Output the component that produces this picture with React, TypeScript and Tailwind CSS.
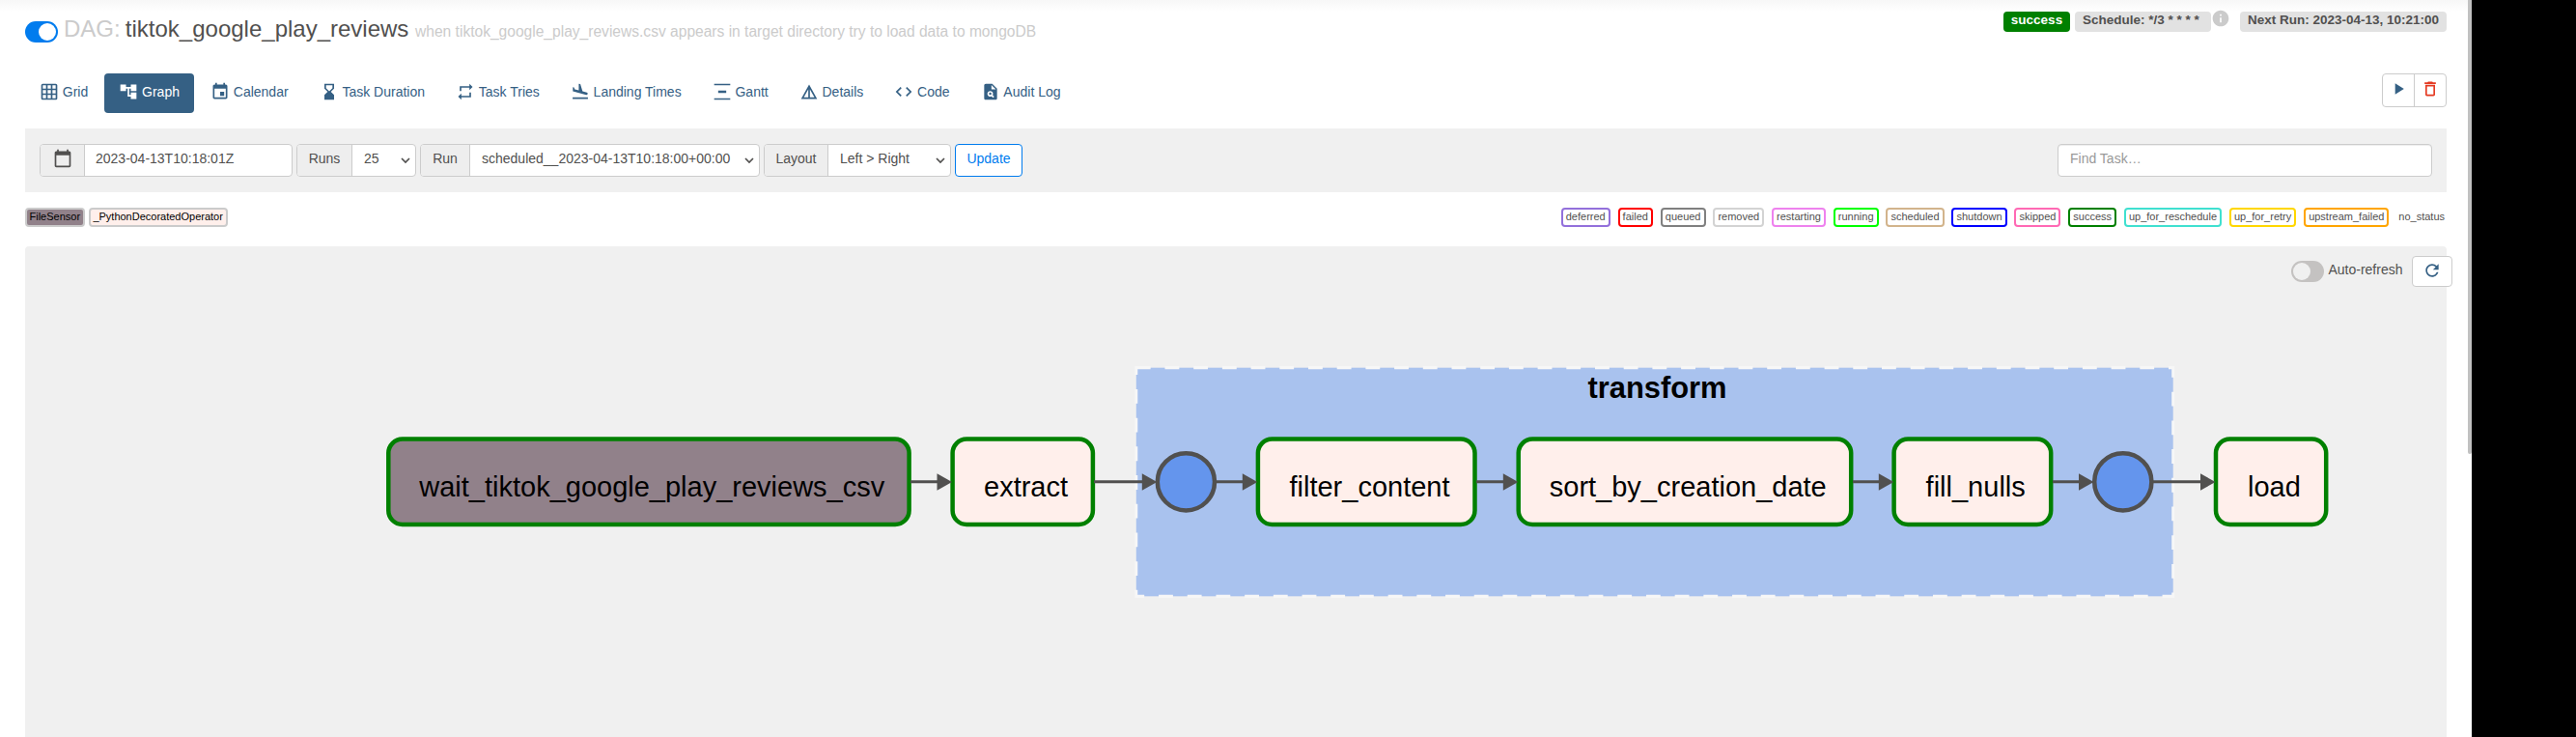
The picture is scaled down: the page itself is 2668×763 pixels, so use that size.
import React from "react";

const ICON = {
  grid: "M20 2H4c-1.1 0-2 .9-2 2v16c0 1.1.9 2 2 2h16c1.1 0 2-.9 2-2V4c0-1.1-.9-2-2-2zM8 20H4v-4h4v4zm0-6H4v-4h4v4zm0-6H4V4h4v4zm6 12h-4v-4h4v4zm0-6h-4v-4h4v4zm0-6h-4V4h4v4zm6 12h-4v-4h4v4zm0-6h-4v-4h4v4zm0-6h-4V4h4v4z",
  tree: "M22 11V3h-7v3H9V3H2v8h7V8h2v10h4v3h7v-8h-7v3h-2V8h2v3z",
  event: "M17 12h-5v5h5v-5zM16 1v2H8V1H6v2H5c-1.11 0-1.99.9-1.99 2L3 19c0 1.1.89 2 2 2h14c1.1 0 2-.9 2-2V5c0-1.1-.9-2-2-2h-1V1h-2zm3 18H5V8h14v11z",
  hourglass: "M6 2v6h.01L6 8.01 10 12l-4 4 .01.01H6V22h12v-5.99h-.01L18 16l-4-4 4-3.99-.01-.01H18V2H6zm10 5.5-4 4-4-4V4h8v3.5z",
  repeat: "M7 7h10v3l4-4-4-4v3H5v6h2V7zm10 10H7v-3l-4 4 4 4v-3h12v-6h-2v4z",
  land: "M2.5 19h19v2h-19zm16.84-3.15c.8.21 1.62-.26 1.84-1.06.21-.8-.26-1.62-1.06-1.84l-5.31-1.42-2.76-9.02L10.12 2v8.28L5.15 8.95l-.93-2.32-1.45-.39v5.17l16.57 4.44z",
  gantt: "M2 2h20v2H2zM2 20h20v2H2zM7 10.5h10v3H7z",
  details: "M12 3 2 21h20L12 3zm1 5.92L18.6 19H13V8.92zm-2 0V19H5.4L11 8.92z",
  code: "M9.4 16.6 4.8 12l4.6-4.6L8 6l-6 6 6 6 1.4-1.4zm5.2 0 4.6-4.6-4.6-4.6L16 6l6 6-6 6-1.4-1.4z",
  audit: "M14 2H6c-1.1 0-1.99.9-1.99 2L4 20c0 1.1.89 2 1.99 2H18c1.1 0 2-.9 2-2V8l-6-6zm1.04 17.45-1.88-1.88c-1.33.71-3.01.53-4.13-.59-1.37-1.37-1.37-3.58 0-4.95 1.37-1.37 3.58-1.37 4.95 0 1.12 1.12 1.31 2.8.59 4.13l1.88 1.88-1.41 1.41zM13 9V3.5L18.5 9H13zM11.5 13a1.5 1.5 0 1 1 0 3 1.5 1.5 0 1 1 0-3z",
  calendar: "M20 3h-1V1h-2v2H7V1H5v2H4c-1.1 0-2 .9-2 2v16c0 1.1.9 2 2 2h16c1.1 0 2-.9 2-2V5c0-1.1-.9-2-2-2zm0 18H4V8h16v13z",
  play: "M8 5v14l11-7z",
  trash: "M6 19c0 1.1.9 2 2 2h8c1.1 0 2-.9 2-2V7H6v12zM8 9h8v10H8V9zm7.5-5-1-1h-5l-1 1H5v2h14V4z",
  info: "M12 2C6.48 2 2 6.48 2 12s4.48 10 10 10 10-4.48 10-10S17.52 2 12 2zm1 15h-2v-6h2v6zm0-8h-2V7h2v2z",
  refresh: "M17.65 6.35C16.2 4.9 14.21 4 12 4c-4.42 0-7.99 3.58-7.99 8s3.57 8 7.99 8c3.73 0 6.84-2.55 7.73-6h-2.08c-.82 2.33-3.04 4-5.65 4-3.31 0-6-2.69-6-6s2.69-6 6-6c1.66 0 3.14.69 4.22 1.78L13 11h7V4l-2.35 2.35z",
};

function Icon({ d, className = "size-5" }: { d: string; className?: string }) {
  return (
    <svg viewBox="0 0 24 24" fill="currentColor" className={`shrink-0 ${className}`}>
      <path d={d} />
    </svg>
  );
}

const TABS = [
  { label: "Grid", icon: ICON.grid },
  { label: "Graph", icon: ICON.tree, active: true },
  { label: "Calendar", icon: ICON.event },
  { label: "Task Duration", icon: ICON.hourglass },
  { label: "Task Tries", icon: ICON.repeat },
  { label: "Landing Times", icon: ICON.land },
  { label: "Gantt", icon: ICON.gantt },
  { label: "Details", icon: ICON.details },
  { label: "Code", icon: ICON.code },
  { label: "Audit Log", icon: ICON.audit },
];

const STATES: [string, string][] = [
  ["deferred", "border-2 px-[3px] border-[mediumpurple]"],
  ["failed", "border-2 px-[3px] border-[red]"],
  ["queued", "border-2 px-[3px] border-[gray]"],
  ["removed", "border-2 px-[3px] border-[lightgrey]"],
  ["restarting", "border-2 px-[3px] border-[violet]"],
  ["running", "border-2 px-[3px] border-[lime]"],
  ["scheduled", "border-2 px-[3px] border-[tan]"],
  ["shutdown", "border-2 px-[3px] border-[blue]"],
  ["skipped", "border-2 px-[3px] border-[hotpink]"],
  ["success", "border-2 px-[3px] border-[green]"],
  ["up_for_reschedule", "border-2 px-[3px] border-[turquoise]"],
  ["up_for_retry", "border-2 px-[3px] border-[gold]"],
  ["upstream_failed", "border-2 px-[3px] border-[orange]"],
  ["no_status", "border-y-2 px-[2px] border-transparent"],
];

function Select({ label, value, labelWidth, valueWidth }: { label: string; value: string; labelWidth: string; valueWidth: string }) {
  return (
    <div className="flex h-[34px] overflow-hidden rounded border border-[#ccc] bg-white">
      <div className={`flex items-center justify-center border-r border-[#ccc] bg-[#eee] pb-1 ${labelWidth}`}>{label}</div>
      <div className={`flex items-center justify-between pl-3 pr-[5px] ${valueWidth}`}>
        <span className="pb-1">{value}</span>
        <svg viewBox="0 0 10 10" className="size-[10px]" fill="none" stroke="currentColor" strokeWidth="1.7">
          <path d="M1 3l4 4 4-4" />
        </svg>
      </div>
    </div>
  );
}

const NODES = [
  { x: 402.3, w: 539.3, label: "wait_tiktok_google_play_reviews_csv", fill: "#91818a" },
  { x: 986.6, w: 145.3, label: "extract", fill: "#ffefeb" },
  { x: 1302.9, w: 224.6, label: "filter_content", fill: "#ffefeb" },
  { x: 1572.7, w: 344.5, label: "sort_by_creation_date", fill: "#ffefeb" },
  { x: 1961.6, w: 162.6, label: "fill_nulls", fill: "#ffefeb" },
  { x: 2295, w: 114.2, label: "load", fill: "#ffefeb" },
];

const EDGES = [
  [943, 986],
  [1133, 1198.3],
  [1260, 1302.3],
  [1529, 1572.3],
  [1919, 1961.3],
  [2126, 2168.5],
  [2230, 2294.5],
];

function Graph() {
  return (
    <svg width="2508" height="508" viewBox="26 255 2508 508" className="block" fontFamily="'Liberation Sans', Arial, sans-serif">
      <g opacity="0.5">
        <rect x="1176.8" y="380.7" width="1073.9" height="236.6" fill="#6495ed" stroke="#fff" strokeWidth="2.97" strokeDasharray="14.85" />
      </g>
      <text x="1716.5" y="411.5" fontSize="30.9" fontWeight="bold" textAnchor="middle">transform</text>
      {NODES.map((n) => (
        <g key={n.label}>
          <rect x={n.x} y="454.6" width={n.w} height="88.4" rx="14.5" fill={n.fill} stroke="green" strokeWidth="4.5" />
          <text x={n.x + n.w / 2 + 3.3} y="513.7" fontSize="29" textAnchor="middle">{n.label}</text>
        </g>
      ))}
      {[1228.4, 2198.8].map((x) => (
        <circle key={x} cx={x} cy="498.8" r="29.6" fill="#6495ed" stroke="#51504f" strokeWidth="4.5" />
      ))}
      {EDGES.map(([a, b]) => (
        <g key={a}>
          <path d={`M${a} 498.8H${b - 8}`} stroke="#51504f" strokeWidth="3" />
          <path d={`M${b - 15.5} 490.3v17.5L${b} 499z`} fill="#51504f" />
        </g>
      ))}
    </svg>
  );
}

export default function App() {
  return (
    <div className="flex h-[763px] w-[2668px] overflow-hidden bg-black font-['Liberation_Sans',Arial,sans-serif] text-sm text-[#51504f]">
      <div className="flex h-full w-[2560px] bg-white">
        <div className="flex w-[2556px] flex-col bg-[linear-gradient(#f7f7f7,#fff_12px)] pl-[26px] pr-[22px]">
          <header className="flex h-[76px] items-start justify-between">
            <div className="flex items-start">
              <div className="mt-[22px] flex h-[22px] w-[34px] items-center justify-end rounded-full bg-[#017cee] px-0.5">
                <div className="size-[18px] rounded-full bg-white" />
              </div>
              <h3 className="ml-[6px] mt-[16px] whitespace-pre text-[24px] leading-[27px]">
                <span className="-mr-[1.5px] text-[#cbcbcb]">DAG:</span> tiktok_google_play_reviews{" "}
                <span className="text-[15.6px] tracking-[-0.01px] text-[#cbcbcb]">
                  when tiktok_google_play_reviews.csv appears in target directory try to load data to mongoDB
                </span>
              </h3>
            </div>
            <div className="flex items-start pt-3 text-[13.5px] font-bold leading-[17px]">
              <div className="h-[21px] w-[69px] rounded bg-[green] text-center text-white">success</div>
              <div className="ml-[5px] h-[21px] w-[141px] rounded bg-[#e2e2e2] pl-[8px]">Schedule: */3 * * * *</div>
              <Icon d={ICON.info} className="-mt-[3px] size-5 text-[#cbcbcb]" />
              <div className="ml-[10px] h-[21px] w-[214px] rounded bg-[#e2e2e2] text-center">Next Run: 2023-04-13, 10:21:00</div>
            </div>
          </header>

          <div className="flex h-[57px] items-start justify-between">
            <nav className="flex gap-0.5">
              {TABS.map((t) => (
                <div
                  key={t.label}
                  className={`flex h-[41px] items-center gap-[3.8px] rounded px-[15px] pb-[3px] ${t.active ? "bg-[#356084] text-white" : "text-[#356084]"}`}
                >
                  <Icon d={t.icon} />
                  <span>{t.label}</span>
                </div>
              ))}
            </nav>
            <div className="flex h-[35px] w-[67px] rounded border border-[#ccc] bg-white">
              <div className="flex flex-1 items-center justify-center border-r border-[#ccc] pb-[3px] text-[#356084]">
                <Icon d={ICON.play} />
              </div>
              <div className="flex flex-1 items-center justify-center pb-[3px] text-[#e43921]">
                <Icon d={ICON.trash} />
              </div>
            </div>
          </div>

          <div className="flex h-[66px] items-center justify-between bg-[#f0f0f0] px-[15px]">
            <div className="flex gap-1">
              <div className="flex h-[34px] w-[262px] overflow-hidden rounded border border-[#ccc] bg-white">
                <div className="flex w-[46px] items-center justify-center border-r border-[#ccc] bg-[#eee] pb-1">
                  <Icon d={ICON.calendar} />
                </div>
                <div className="flex items-center pb-1 pl-[11px]">2023-04-13T10:18:01Z</div>
              </div>
              <Select label="Runs" value="25" labelWidth="w-[57px]" valueWidth="w-[65px]" />
              <Select label="Run" value="scheduled__2023-04-13T10:18:00+00:00" labelWidth="w-[51px]" valueWidth="w-[299px]" />
              <Select label="Layout" value="Left &gt; Right" labelWidth="w-[66px]" valueWidth="w-[126px]" />
              <div className="flex h-[34px] w-[70px] items-center justify-center rounded border border-[#017cee] bg-white pb-1 text-[#017cee]">Update</div>
            </div>
            <div className="flex h-[34px] w-[388px] items-center rounded border border-[#ccc] bg-white pb-1 pl-3 text-[#999] shadow-[inset_0_1px_1px_rgba(0,0,0,0.075)]">
              Find Task…
            </div>
          </div>

          <div className="flex h-[56px] items-start justify-between pt-4 text-[11px] leading-[15px]">
            <div className="flex gap-1 text-black">
              <div className="h-5 rounded border-2 border-[#cbcbcb] bg-[#91818a] px-[2.5px]">FileSensor</div>
              <div className="h-5 rounded border-2 border-[#cbcbcb] bg-[#ffefeb] px-[2.8px]">_PythonDecoratedOperator</div>
            </div>
            <div className="flex gap-[7.9px]">
              {STATES.map(([name, style]) => (
                <div key={name} className={`h-5 rounded ${style}`}>{name}</div>
              ))}
            </div>
          </div>

          <div className="relative h-[508px] rounded-t bg-[#f0f0f0]">
            <Graph />
            <div className="absolute -right-[6px] top-[10px] flex h-8 items-start">
              <div className="mt-[5px] flex h-[22px] w-[34px] items-center rounded-full bg-[#c4c2c1] px-0.5">
                <div className="size-[18px] rounded-full bg-[#f0f0f0]" />
              </div>
              <span className="ml-1 mt-[3px] leading-[22px]">Auto-refresh</span>
              <div className="ml-[9.5px] flex h-8 w-[42px] items-center justify-center rounded-sm border border-[#ccc] bg-white pb-[2px] text-[#356084]">
                <Icon d={ICON.refresh} />
              </div>
            </div>
          </div>
        </div>
        <div className="h-[470px] w-1 rounded-b bg-[#c1c1c1]" />
      </div>
    </div>
  );
}
